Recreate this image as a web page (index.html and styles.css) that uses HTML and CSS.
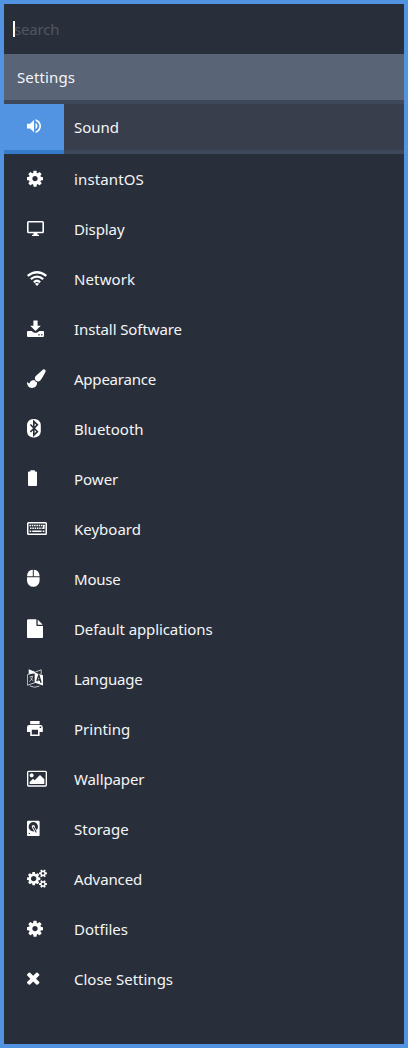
FILE: index.html
```html
<!DOCTYPE html>
<html lang="en">
<head>
<meta charset="utf-8">
<title>Settings</title>
<link rel="stylesheet" href="styles.css">
</head>
<body>
<svg class="defs" width="0" height="0" aria-hidden="true">
<symbol id="cog" viewBox="128 -32 2016 1824"><path d="M1152 896q0-106-75-181t-181-75-181 75-75 181 75 181 181 75 181-75 75-181zm512-109v222q0 12-8 23t-20 13l-185 28q-19 54-39 91 35 50 107 138 10 12 10 25t-9 23q-27 37-99 108t-94 71q-12 0-26-9l-138-108q-44 23-91 38-16 136-29 186-7 28-36 28h-222q-14 0-24.5-8.5t-11.5-21.5l-28-184q-49-16-90-37l-141 107q-10 9-25 9-14 0-25-11-126-114-165-168-7-10-7-23 0-12 8-23 15-21 51-66.5t54-70.5q-27-50-41-99l-183-27q-13-2-21-12.5t-8-23.5v-222q0-12 8-23t19-13l186-28q14-46 39-92-40-57-107-138-10-12-10-24 0-10 9-23 26-36 98.5-107.5t94.5-71.5q13 0 26 10l138 107q44-23 91-38 16-136 29-186 7-28 36-28h222q14 0 24.5 8.5t11.5 21.5l28 184q49 16 90 37l142-107q9-9 24-9 13 0 25 10 129 119 165 170 7 8 7 22 0 12-8 23-15 21-51 66.5t-54 70.5q26 50 41 98l183 28q13 2 21 12.5t8 23.5z"/></symbol>
</svg>
<main class="menu">
<div class="search"><span class="caret"></span><span class="placeholder">search</span></div>
<h1 class="title wide">Settings</h1>
<ul class="list">
<li class="row selected"><span class="cell"><svg class="icon" viewBox="0 0 21 19"><path transform="translate(-2.33 -.2) scale(.777)" d="M3 9v6h4l5 5V4L7 9H3zm13.5 3c0-1.77-1.02-3.29-2.5-4.03v8.05c1.48-.73 2.5-2.25 2.5-4.02zM14 3.23v2.06c2.89.86 5 3.54 5 6.71s-2.11 5.85-5 6.71v2.06c4.01-.91 7-4.49 7-8.77s-2.99-7.86-7-8.77z"/></svg></span><span class="label">Sound</span></li>
<li class="row"><span class="cell"><svg class="icon"><use href="#cog"/></svg></span><span class="label wide">instantOS</span></li>
<li class="row"><span class="cell"><svg class="icon" viewBox="0 0 21 19"><rect class="line" x=".8" y="2.7" width="15.400" height="10.800" rx=".8" stroke-width="1.600"/><path d="M6.600 14h3.800v1.400l1.600.6v1.100H5v-1.100l1.600-.6z"/></svg></span><span class="label tight">Display</span></li>
<li class="row"><span class="cell"><svg class="icon" viewBox="0 0 21 19"><path class="line" stroke-width="2.300" d="M.7 6.800Q10-.4 19.300 6.800M3.800 10.200Q10 5 16.200 10.200M6.900 13.300Q10 10.300 13.100 13.300"/><path d="M7.900 14.700Q10 13.200 12.100 14.700L10 17z"/></svg></span><span class="label wide">Network</span></li>
<li class="row"><span class="cell"><svg class="icon" viewBox="0 0 21 19"><path d="M6.4 1.400h4.200v5.300h3.200L8.500 12 3.200 6.700h3.200z"/><path fill-rule="evenodd" d="M1 12h3.500l2.600 1.700h2.800l2.600-1.700H16q1 0 1 1v4q0 1-1 1H1q-1 0-1-1v-4q0-1 1-1zm10.400 3v1.400h1.200V15zm2.800 0v1.400h1.200V15z"/></svg></span><span class="label tight">Install Software</span></li>
<li class="row"><span class="cell"><svg class="icon" viewBox="0 -32 2016 1824"><path d="M1615 0q70 0 122.5 46.5t52.5 116.5q0 63-45 151-332 629-465 752-97 91-218 91-126 0-216.5-92.5t-90.5-219.5q0-128 92-212l638-579q59-54 130-54zm-909 1034q39 76 106.5 130t150.5 76l1 71q4 213-129.5 347t-348.5 134q-123 0-218-46.5t-152.5-127.5-86.5-183-29-220q7 5 41 30t62 44.5 59 36.5 46 17q41 0 55-37 25-66 57.5-112.5t69.5-76 88-47.5 103-25.5 125-10.5z"/></svg></span><span class="label tighter">Appearance</span></li>
<li class="row"><span class="cell"><svg class="icon" viewBox="0 0 21 19"><rect width="13.800" height="18.500" rx="6.200"/><path class="cut" stroke-width="1.600" d="M3.400 5.500l7 7.200-3.600 3.400V2.400l3.600 3.400-7 7.200"/></svg></span><span class="label">Bluetooth</span></li>
<li class="row"><span class="cell"><svg class="icon" viewBox="0 0 21 19"><path d="M3.400 1.200h4.400v1.400h1.300q.9 0 .9 1V16q0 1-.9 1H2q-1 0-1-1V3.600q0-1 1-1h1.400z"/></svg></span><span class="label">Power</span></li>
<li class="row"><span class="cell"><svg class="icon" viewBox="0 0 21 19"><rect class="line" x=".75" y="3.750" width="18.500" height="11.500" rx=".8" stroke-width="1.500"/><path class="line" stroke-width="1.500" stroke-dasharray="1.500 .8" d="M2.500 6.600h15M3 9.300h12.800"/><path class="line" stroke-width="1.500" d="M16.800 6v4M2.600 12.300H4.200M5.200 12.300h9.400M15.700 12.300h1.700"/></svg></span><span class="label">Keyboard</span></li>
<li class="row"><span class="cell"><svg class="icon" viewBox="0 0 21 19"><path d="M5.800.8v6.400H0Q.3 1.300 5.800.8zm1 0v6.400h5.800Q12.300 1.300 6.800.8zM0 8.200h12.600v3.300a6.300 6.300 0 0 1-12.600 0z"/></svg></span><span class="label tighter">Mouse</span></li>
<li class="row"><span class="cell"><svg class="icon" viewBox="128 -32 2016 1824"><path d="M1152 512v-472q22 14 36 28l408 408q14 14 28 36h-472zm-128 32q0 40 28 68t68 28h544v1056q0 40-28 68t-68 28h-1344q-40 0-68-28t-28-68v-1600q0-40 28-68t68-28h800v544z"/></svg></span><span class="label tight">Default applications</span></li>
<li class="row"><span class="cell"><svg class="icon" viewBox="0 0 21 19"><path d="M1.700.3L8 2.700v1.600L1.700 5zM8 3.700L16 6.200v10.300l-8-2.800z"/><path class="line" stroke-width=".7" d="M8 3.300L.4 5.700v10.500L8 13.700zM8.500 3L14.200.8v4.700M2.800 16.900q5 2.600 9.500.2M2.600 8.100l3-.9q-.4 3.500-3.300 5.300M3.500 9.300l2.700 2.500"/><path class="cut" stroke-width="1.400" d="M9.800 12.300l2-6.200 2.300 7.600M10.500 10.600l2.700.7"/></svg></span><span class="label tighter">Language</span></li>
<li class="row"><span class="cell"><svg class="icon" viewBox="0 0 21 19"><path fill-rule="evenodd" d="M3.200 2h9.400v3.200H3.200zM2.300 6h11.200q2.300 0 2.300 2.400V13h-3.200v4H3.200v-4H0V8.400Q0 6 2.300 6zm10.400 1.500v1.500h1.500V7.500zM4.800 10.800v4.600H11v-4.600z"/></svg></span><span class="label">Printing</span></li>
<li class="row"><span class="cell"><svg class="icon" viewBox="0 -32 2016 1824"><path d="M640 576q0 80-56 136t-136 56-136-56-56-136 56-136 136-56 136 56 56 136zm1024 384v448h-1408v-192l320-320 160 160 512-512zm96-704h-1600q-13 0-22.5 9.5t-9.5 22.5v1216q0 13 9.5 22.5t22.5 9.5h1600q13 0 22.5-9.5t9.5-22.5v-1216q0-13-9.5-22.5t-22.5-9.5zm160 32v1216q0 66-47 113t-113 47h-1600q-66 0-113-47t-47-113v-1216q0-66 47-113t113-47h1600q66 0 113 47t47 113z"/></svg></span><span class="label tight">Wallpaper</span></li>
<li class="row"><span class="cell"><svg class="icon" viewBox="0 0 21 19"><rect y="1.700" width="12.600" height="15.400" rx="1.200"/><circle class="hole" cx="6.300" cy="7.700" r="4.700"/><circle cx="6.300" cy="7.600" r="1.500"/><path class="line" stroke-width="2.600" d="M6.200 8l3.600 6"/><path class="cut" stroke-width="1.100" d="M6.300 7.800l3 5.700M1.700 14.500h1.200"/></svg></span><span class="label">Storage</span></li>
<li class="row"><span class="cell"><svg class="icon" viewBox="0 -32 2016 1824"><path d="M896 896q0-106-75-181t-181-75-181 75-75 181 75 181 181 75 181-75 75-181zm768 512q0-52-38-90t-90-38-90 38-38 90q0 53 37.5 90.5t90.5 37.5 90.5-37.5 37.5-90.5zm0-1024q0-52-38-90t-90-38-90 38-38 90q0 53 37.5 90.5t90.5 37.5 90.5-37.5 37.5-90.5zm-384 421v185q0 10-7 19.5t-16 10.5l-155 24q-11 35-32 76 34 48 90 115 7 11 7 20 0 12-7 19-23 30-82.5 89.5t-78.5 59.5q-11 0-21-7l-115-90q-37 19-77 31-11 108-23 155-7 24-30 24h-186q-11 0-20-7.5t-10-17.5l-23-153q-34-10-75-31l-118 89q-7 7-20 7-11 0-21-8-144-133-144-160 0-9 7-19 10-14 41-53t47-61q-23-44-35-82l-152-24q-10-1-17-9.5t-7-19.5v-185q0-10 7-19.5t16-10.5l155-24q11-35 32-76-34-48-90-115-7-11-7-20 0-12 7-20 22-30 82-89t79-59q11 0 21 7l115 90q34-18 77-32 11-108 23-154 7-24 30-24h186q11 0 20 7.5t10 17.5l23 153q34 10 75 31l118-89q8-7 20-7 11 0 21 8 144 133 144 160 0 8-7 19-12 16-42 54t-45 60q23 48 34 82l152 23q10 2 17 10.5t7 19.5zm640 533v140q0 16-149 31-12 27-30 52 51 113 51 138 0 4-4 7-122 71-124 71-8 0-46-47t-52-68q-20 2-30 2t-30-2q-14 21-52 68t-46 47q-2 0-124-71-4-3-4-7 0-25 51-138-18-25-30-52-149-15-149-31v-140q0-16 149-31 13-29 30-52-51-113-51-138 0-4 4-7 4-2 35-20t59-34 30-16q8 0 46 46.5t52 67.5q20-2 30-2t30 2q51-71 92-112l6-2q4 0 124 70 4 3 4 7 0 25-51 138 17 23 30 52 149 15 149 31zm0-1024v140q0 16-149 31-12 27-30 52 51 113 51 138 0 4-4 7-122 71-124 71-8 0-46-47t-52-68q-20 2-30 2t-30-2q-14 21-52 68t-46 47q-2 0-124-71-4-3-4-7 0-25 51-138-18-25-30-52-149-15-149-31v-140q0-16 149-31 13-29 30-52-51-113-51-138 0-4 4-7 4-2 35-20t59-34 30-16q8 0 46 46.5t52 67.5q20-2 30-2t30 2q51-71 92-112l6-2q4 0 124 70 4 3 4 7 0 25-51 138 17 23 30 52 149 15 149 31z"/></svg></span><span class="label tight">Advanced</span></li>
<li class="row"><span class="cell"><svg class="icon"><use href="#cog"/></svg></span><span class="label">Dotfiles</span></li>
<li class="row"><span class="cell"><svg class="icon" viewBox="302 32 2016 1824"><path d="M1490 1322q0 40-28 68l-136 136q-28 28-68 28t-68-28l-294-294-294 294q-28 28-68 28t-68-28l-136-136q-28-28-28-68t28-68l294-294-294-294q-28-28-28-68t28-68l136-136q28-28 68-28t68 28l294 294 294-294q28-28 68-28t68 28l136 136q28 28 28 68t-28 68l-294 294 294 294q28 28 28 68z"/></svg></span><span class="label">Close Settings</span></li>
</ul>
</main>
</body>
</html>
```
FILE: styles.css
```css
* { box-sizing: border-box; }
body {
  margin: 0;
  font: 15px/20px "Noto Sans", "Open Sans", sans-serif;
  color: #f4f5f7;
}
.defs { position: absolute; }
.menu {
  height: 1048px;
  border: 4px solid #5294e2;
  background: #292f3a;
}
.search {
  height: 50px;
  padding-left: 9px;
  display: flex;
  align-items: center;
}
.caret { width: 2px; height: 16px; margin-top: -1px; background: #fff; }
.placeholder { color: #505663; margin-left: -1px; letter-spacing: -.2px; }
.title {
  height: 50px;
  margin: 0;
  padding: 13px 13px 0;
  font-size: 15px;
  font-weight: 400;
  background: #5a6477;
  border-bottom: 4px solid #3e485a;
}
.list { margin: 0; padding: 0; list-style: none; }
.row { height: 50px; display: flex; }
.cell {
  width: 60px;
  padding: 0 0 1px 23px;
  display: flex;
  align-items: center;
}
.label {
  flex: 1;
  padding-left: 10px;
  display: flex;
  align-items: center;
  white-space: nowrap;
}
.wide { letter-spacing: .12px; }
.tight { letter-spacing: -.1px; }
.tighter { letter-spacing: -.22px; }
.selected .cell { background: #5294e2; border-bottom: 4px solid #367bc9; }
.selected .label { background: #383e4b; border-bottom: 4px solid #3e485a; }
.icon { width: 21px; height: 19px; fill: #fff; }
.line { fill: none; stroke: #fff; }
.cut { fill: none; stroke: #292f3a; }
.hole { fill: #292f3a; }
```
